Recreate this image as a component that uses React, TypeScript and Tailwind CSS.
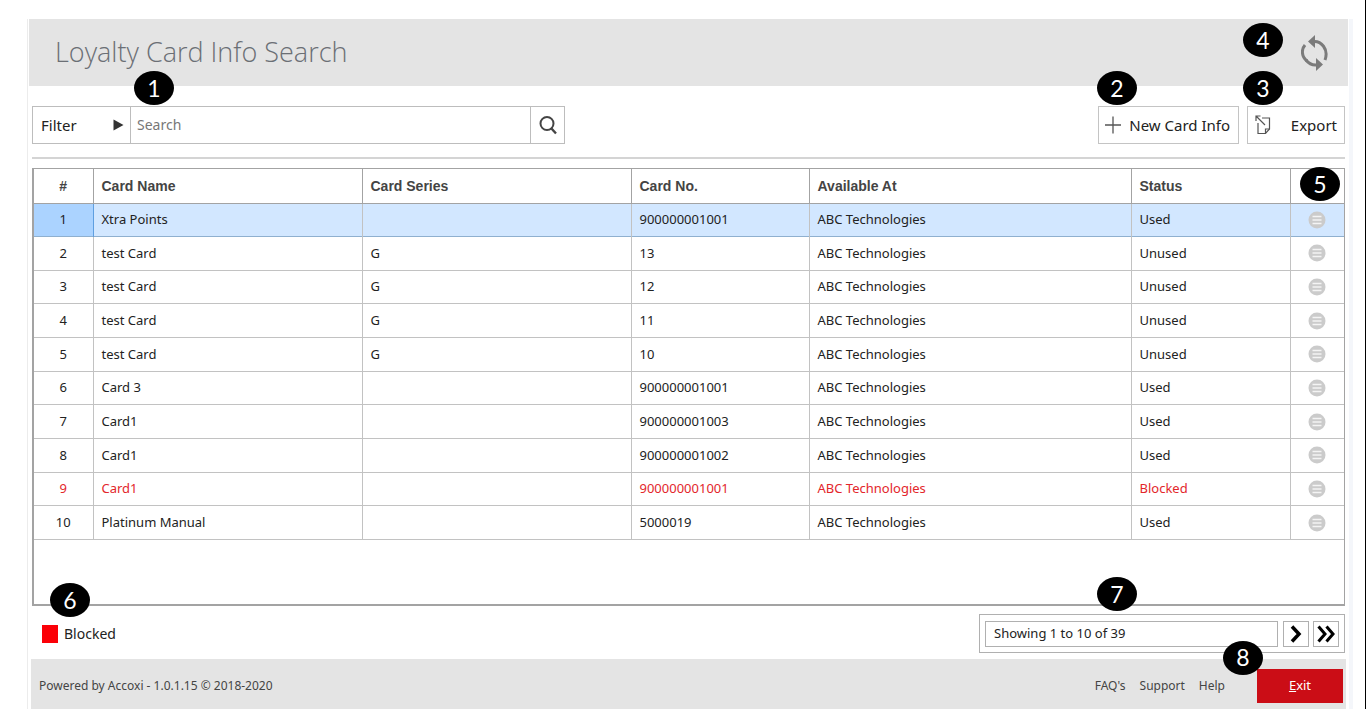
import React from "react";

type Card = {
  name: string;
  series: string;
  no: string;
  status: "Used" | "Unused" | "Blocked";
};

const CARDS: Card[] = [
  { name: "Xtra Points", series: "", no: "900000001001", status: "Used" },
  { name: "test Card", series: "G", no: "13", status: "Unused" },
  { name: "test Card", series: "G", no: "12", status: "Unused" },
  { name: "test Card", series: "G", no: "11", status: "Unused" },
  { name: "test Card", series: "G", no: "10", status: "Unused" },
  { name: "Card 3", series: "", no: "900000001001", status: "Used" },
  { name: "Card1", series: "", no: "900000001003", status: "Used" },
  { name: "Card1", series: "", no: "900000001002", status: "Used" },
  { name: "Card1", series: "", no: "900000001001", status: "Blocked" },
  { name: "Platinum Manual", series: "", no: "5000019", status: "Used" },
];

const COLUMNS = ["Card Name", "Card Series", "Card No.", "Available At", "Status"];

/** Numbered marker that lies over the control it explains. */
function Marker({ n, className }: { n: number; className: string }) {
  return (
    <span
      className={`pointer-events-none absolute z-10 flex h-[34px] w-10 items-center justify-center rounded-[50%] bg-black font-['Lato',sans-serif] text-[23px] font-normal text-white ${className}`}
    >
      {n}
    </span>
  );
}

function RefreshIcon() {
  return (
    <svg width="28" height="38" viewBox="0 0 28 38" fill="none" aria-hidden="true">
      <path d="M6 27C0 22 0.500 15 4 11" stroke="#7b7b7b" strokeWidth="3" />
      <path d="M12 7.500C20 6.500 28 15 24 26" stroke="#7b7b7b" strokeWidth="3" />
      <path d="M14 1v13L7 7.500z" fill="#7b7b7b" />
      <path d="M5 26C8 30 11.500 31.500 16 31" stroke="#7b7b7b" strokeWidth="3" />
      <path d="M15 24v13l7-6.500z" fill="#7b7b7b" />
    </svg>
  );
}

function SearchIcon() {
  return (
    <svg width="20" height="20" viewBox="0 0 20 20" fill="none" stroke="#444" strokeWidth="2" aria-hidden="true">
      <circle cx="9" cy="8.500" r="6.500" />
      <path d="M13 13L18 18.500" strokeWidth="2.400" />
    </svg>
  );
}

function PlusIcon() {
  return (
    <svg width="16" height="18" viewBox="0 0 16 18" stroke="#555" aria-hidden="true">
      <path d="M8 0.500v17M0 9h16" strokeWidth="1.300" />
    </svg>
  );
}

function ExportIcon() {
  return (
    <svg width="16" height="20" viewBox="0 0 16 20" fill="none" stroke="#555" strokeWidth="1.200" aria-hidden="true">
      <path d="M7 3h7.500v11L10.500 18.500H3V8" />
      <path d="M14.500 14h-4v4.500" />
      <path d="M1 1l9 9M1 6V1h4.500" />
    </svg>
  );
}

function MenuDisc() {
  return (
    <svg width="18" height="18" viewBox="0 0 18 18" aria-hidden="true">
      <circle cx="9" cy="9" r="8.500" fill="#cbcbcb" />
      <path d="M4.500 5.500h9M4.500 9h9M4.500 12.500h9" stroke="#f4f4f4" strokeWidth="1.500" />
    </svg>
  );
}

export default function App() {
  return (
    <div className="flex min-h-screen flex-col border-r border-black bg-white pt-[19px] pr-3 pl-[27px] font-['Noto_Sans',sans-serif] text-[#222]">
      <div className="flex flex-1 flex-col border-r-4 border-l border-r-[#f4f6fa] border-l-[#ececec]">
        <header className="relative mx-px flex h-[67px] items-center justify-between bg-[#e4e4e4] pr-[19px] pl-[26px]">
          <h1 className="font-['Open_Sans',sans-serif] text-[27px] font-light text-[#6b6f75]">
            Loyalty Card Info Search
          </h1>
          <button type="button" aria-label="Refresh">
            <RefreshIcon />
          </button>
          <Marker n={4} className="top-1 right-[65px]" />
        </header>

        <main className="flex flex-1 flex-col pt-5 pr-1 pl-1">
          <div className="flex items-start justify-between">
            <form className="relative flex h-[38px] w-[533px] border border-[#bdbdbd]">
              <button
                type="button"
                className="flex w-[98px] items-center justify-between border-r border-[#bdbdbd] pr-1.5 pl-2 text-[15px]"
              >
                Filter
                <svg width="11" height="12" viewBox="0 0 11 12" aria-hidden="true">
                  <path d="M0.500 0.500v11L10.500 6z" fill="#333" />
                </svg>
              </button>
              <input
                type="text"
                aria-label="Search"
                placeholder="Search"
                className="min-w-0 flex-1 px-1.5 text-sm outline-none placeholder:text-[#777]"
              />
              <button
                type="button"
                aria-label="Run search"
                className="flex w-[34px] items-center justify-center border-l border-[#bdbdbd]"
              >
                <SearchIcon />
              </button>
              <Marker n={1} className="-top-9 left-[101px]" />
            </form>

            <div className="flex gap-2">
              <button
                type="button"
                className="relative flex h-[38px] w-[141px] items-center justify-between border border-[#c4c4c4] pr-2 pl-1.5 text-[15px] whitespace-nowrap"
              >
                <PlusIcon />
                New Card Info
                <Marker n={2} className="-top-9 -left-0.5" />
              </button>
              <button
                type="button"
                className="relative flex h-[38px] w-[98px] items-center justify-between border border-[#c4c4c4] px-[7px] text-[15px]"
              >
                <ExportIcon />
                Export
                <Marker n={3} className="-top-9 -left-[5px]" />
              </button>
            </div>
          </div>

          <hr className="mt-[13px] border-t-2 border-[#d4d4d4]" />

          <section className="relative mt-[9px] h-[438px] border border-b-2 border-l-2 border-[#a3a3a3]">
            <table className="h-[371px] w-full table-fixed border-collapse text-[13px]">
              <colgroup>
                <col className="w-[59px]" />
                <col className="w-[269px]" />
                <col className="w-[269px]" />
                <col className="w-[178px]" />
                <col className="w-[322px]" />
                <col className="w-[159px]" />
                <col className="w-[54px]" />
              </colgroup>
              <thead>
                <tr className="h-[34px] border-b border-[#a3a3a3] text-left font-['Liberation_Sans',sans-serif] text-sm text-[#444]">
                  <th className="border-r border-[#a3a3a3] text-center">#</th>
                  {COLUMNS.map((c) => (
                    <th key={c} className="border-r border-[#a3a3a3] px-2">
                      {c}
                    </th>
                  ))}
                  <th aria-label="Actions" />
                </tr>
              </thead>
              <tbody>
                {CARDS.map((card, i) => (
                  <tr
                    key={i}
                    className={`border-b ${i === 0 ? "border-[#8fb0cf] bg-[#d2e7ff]" : "border-[#c2c2c2]"} ${card.status === "Blocked" ? "text-[#e3262b]" : ""}`}
                  >
                    <td
                      className={`border-r text-center ${i === 0 ? "border-[#5f9fe0] bg-[#abd3ff]" : "border-[#c2c2c2]"}`}
                    >
                      {i + 1}
                    </td>
                    <td className="border-r border-[#c2c2c2] px-2">{card.name}</td>
                    <td className="border-r border-[#c2c2c2] px-2">{card.series}</td>
                    <td className="border-r border-[#c2c2c2] px-2">{card.no}</td>
                    <td className="border-r border-[#c2c2c2] px-2">ABC Technologies</td>
                    <td className="border-r border-[#c2c2c2] px-2">{card.status}</td>
                    <td>
                      <button type="button" aria-label="Row menu" className="mx-auto block">
                        <MenuDisc />
                      </button>
                    </td>
                  </tr>
                ))}
              </tbody>
            </table>
            <Marker n={5} className="-top-0.5 right-1" />
            <Marker n={6} className="-bottom-[13px] left-4" />
          </section>

          <div className="mt-2 mb-1.5 flex items-center justify-between">
            <div className="flex items-center gap-1.5 pl-2.5 text-sm">
              <span className="h-[18px] w-4 bg-[#fb0007]" />
              Blocked
            </div>
            <nav
              aria-label="Pages"
              className="relative flex h-[39px] w-[366px] items-center gap-1 border border-[#b0b0b0] px-[5px] text-[13px]"
            >
              <span className="mr-px flex h-[26px] flex-1 items-center border border-[#b0b0b0] px-2">
                Showing 1 to 10 of 39
              </span>
              <button
                type="button"
                aria-label="Next page"
                className="flex size-[26px] items-center justify-center border border-[#b0b0b0]"
              >
                <svg width="12" height="18" viewBox="0 0 12 18" fill="none" stroke="#000" strokeWidth="3.500" aria-hidden="true">
                  <path d="M2 1.500L9 9l-7 7.500" />
                </svg>
              </button>
              <button
                type="button"
                aria-label="Last page"
                className="flex size-[26px] items-center justify-center border border-[#b0b0b0]"
              >
                <svg width="18" height="18" viewBox="0 0 18 18" fill="none" stroke="#000" strokeWidth="3" aria-hidden="true">
                  <path d="M1.500 1.500L8 9l-6.500 7.500M9.500 1.500L16 9l-6.500 7.500" />
                </svg>
              </button>
              <Marker n={7} className="-top-[38px] left-[117px]" />
            </nav>
          </div>
        </main>

        <footer className="mx-[3px] flex h-[50px] items-center justify-between bg-[#e4e4e4] pt-[3px] pr-[3px] pl-2 text-xs text-[#444]">
          <span>Powered by Accoxi - 1.0.1.15 © 2018-2020</span>
          <div className="flex items-center gap-3.5">
            <a href="#faqs">FAQ's</a>
            <a href="#support">Support</a>
            <a href="#help">Help</a>
            <button type="button" className="relative ml-[18px] h-[34px] w-[86px] bg-[#cb0d16] text-[13px] text-white">
              <span className="underline">E</span>xit
              <Marker n={8} className="-top-7 -left-[34px]" />
            </button>
          </div>
        </footer>
      </div>
    </div>
  );
}
